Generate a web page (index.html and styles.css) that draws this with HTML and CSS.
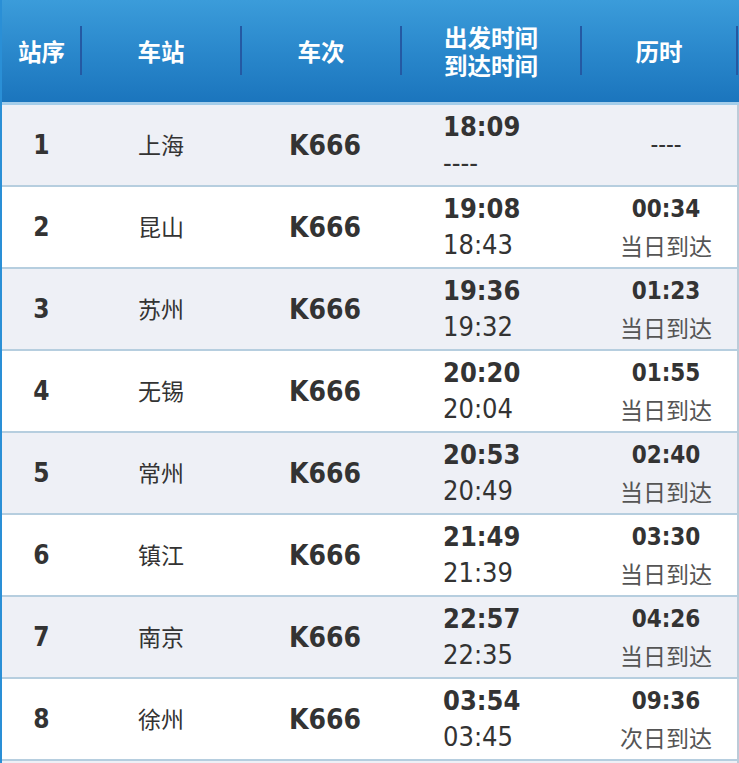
FILE: index.html
```html
<!DOCTYPE html>
<html lang="zh-CN">
<head>
<meta charset="utf-8">
<title>K666 时刻表</title>
<link rel="stylesheet" href="styles.css">
</head>
<body>
<div class="table">
  <div class="head">
    <div class="hcell">站序</div>
    <div class="hcell">车站</div>
    <div class="hcell">车次</div>
    <div class="hcell two"><span>出发时间</span><span>到达时间</span></div>
    <div class="hcell">历时</div>
  </div>

  <div class="row odd">
    <div class="cell seq">1</div>
    <div class="cell station">上海</div>
    <div class="cell train">K666</div>
    <div class="cell times"><span class="dep">18:09</span><span class="arr">----</span></div>
    <div class="cell dur only">----</div>
  </div>
  <div class="row">
    <div class="cell seq">2</div>
    <div class="cell station">昆山</div>
    <div class="cell train">K666</div>
    <div class="cell times"><span class="dep">19:08</span><span class="arr">18:43</span></div>
    <div class="cell dur"><span class="d">00:34</span><span class="note">当日到达</span></div>
  </div>
  <div class="row odd">
    <div class="cell seq">3</div>
    <div class="cell station">苏州</div>
    <div class="cell train">K666</div>
    <div class="cell times"><span class="dep">19:36</span><span class="arr">19:32</span></div>
    <div class="cell dur"><span class="d">01:23</span><span class="note">当日到达</span></div>
  </div>
  <div class="row">
    <div class="cell seq">4</div>
    <div class="cell station">无锡</div>
    <div class="cell train">K666</div>
    <div class="cell times"><span class="dep">20:20</span><span class="arr">20:04</span></div>
    <div class="cell dur"><span class="d">01:55</span><span class="note">当日到达</span></div>
  </div>
  <div class="row odd">
    <div class="cell seq">5</div>
    <div class="cell station">常州</div>
    <div class="cell train">K666</div>
    <div class="cell times"><span class="dep">20:53</span><span class="arr">20:49</span></div>
    <div class="cell dur"><span class="d">02:40</span><span class="note">当日到达</span></div>
  </div>
  <div class="row">
    <div class="cell seq">6</div>
    <div class="cell station">镇江</div>
    <div class="cell train">K666</div>
    <div class="cell times"><span class="dep">21:49</span><span class="arr">21:39</span></div>
    <div class="cell dur"><span class="d">03:30</span><span class="note">当日到达</span></div>
  </div>
  <div class="row odd">
    <div class="cell seq">7</div>
    <div class="cell station">南京</div>
    <div class="cell train">K666</div>
    <div class="cell times"><span class="dep">22:57</span><span class="arr">22:35</span></div>
    <div class="cell dur"><span class="d">04:26</span><span class="note">当日到达</span></div>
  </div>
  <div class="row">
    <div class="cell seq">8</div>
    <div class="cell station">徐州</div>
    <div class="cell train">K666</div>
    <div class="cell times"><span class="dep">03:54</span><span class="arr">03:45</span></div>
    <div class="cell dur"><span class="d">09:36</span><span class="note">次日到达</span></div>
  </div>
  <div class="row odd">
    <div class="cell seq"></div>
    <div class="cell station"></div>
    <div class="cell train"></div>
    <div class="cell times"></div>
    <div class="cell dur"></div>
  </div>
</div>
</body>
</html>
```

FILE: styles.css
```css
html, body {
  margin: 0;
  padding: 0;
  background: #ffffff;
}
body {
  width: 739px;
  height: 763px;
  overflow: hidden;
  font-family: "DejaVu Sans Condensed", "DejaVu Sans", "Noto Sans CJK SC", sans-serif;
  color: #333333;
}
.table {
  width: 739px;
  border-left: 2px solid #2a8fd6;
  box-sizing: border-box;
}
.head {
  display: grid;
  grid-template-columns: 79px 160px 160px 180px 156px 2px;
  height: 102px;
  background: linear-gradient(to bottom, #3b9cda 0%, #2a88cc 50%, #1b75bd 100%);
  border-bottom: 3px solid #a4cdea;
}
.hcell {
  position: relative;
  display: flex;
  flex-direction: column;
  align-items: center;
  justify-content: center;
  color: #ffffff;
  font-family: "Noto Sans CJK SC", sans-serif;
  font-weight: 700;
  font-size: 23.5px;
  line-height: 28px;
}
.hcell::after {
  content: "";
  position: absolute;
  right: -1px;
  top: 26px;
  bottom: 27px;
  width: 2px;
  background: #2459a3;
}
.row {
  display: grid;
  grid-template-columns: 79px 160px 160px 180px 156px;
  height: 80px;
  background: #ffffff;
  border-bottom: 2px solid #b6cedf;
  border-right: 2px solid #bccbd8;
}
.row.odd {
  background: #eef0f6;
}
.cell {
  display: flex;
  align-items: center;
  justify-content: center;
}
.seq {
  font-weight: 700;
  font-size: 26px;
}
.station {
  font-family: "Noto Sans CJK SC", sans-serif;
  font-size: 23px;
  color: #333333;
  padding-bottom: 3px;
}
.train {
  font-weight: 700;
  font-size: 28px;
  padding-left: 8px;
}
.times {
  flex-direction: column;
  align-items: flex-start;
  padding-left: 42px;
  line-height: 36px;
}
.dep {
  font-weight: 700;
  font-size: 27px;
}
.arr {
  font-size: 27px;
}
.dur {
  flex-direction: column;
  padding-left: 14px;
  line-height: 36px;
}
.dur.only {
  font-size: 24px;
}
.d {
  font-weight: 700;
  font-size: 24px;
}
.note {
  font-family: "Noto Sans CJK SC", sans-serif;
  font-size: 23px;
  color: #555555;
}
```
